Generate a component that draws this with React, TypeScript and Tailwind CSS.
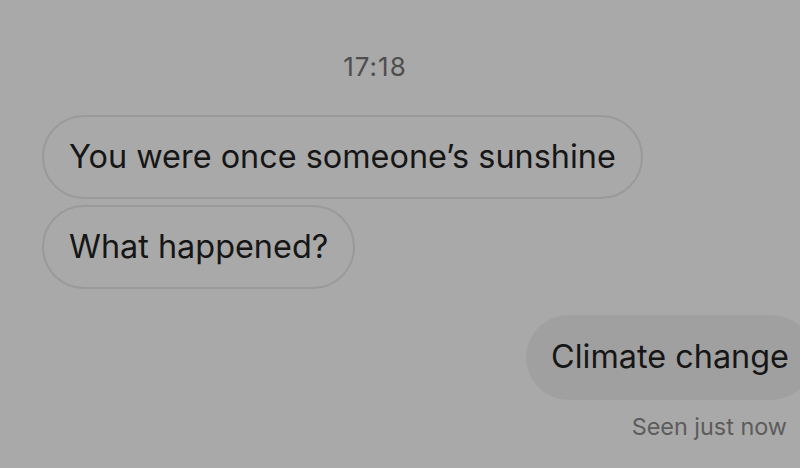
import React from "react";

export default function App() {
  return (
    <div
      className="w-[800px] h-[468px] overflow-hidden bg-[#a9a9a9] text-[#161616] flex flex-col"
      style={{ fontFamily: "Inter, 'Liberation Sans', sans-serif" }}
    >
      <div className="mt-[54px] h-[26px] pr-[50px] flex items-center justify-center text-[26px] tracking-[1px] text-[#4e4e4e] leading-none">
        17:18
      </div>
      <div className="mt-[35px] pl-[42px] flex flex-col items-start gap-[6px]">
        <div className="h-[84px] flex items-center px-[25px] rounded-full border-2 border-[#9a9a9a] text-[32.4px]">
          You were once someone’s sunshine
        </div>
        <div className="h-[84px] flex items-center px-[25px] rounded-full border-2 border-[#9a9a9a] text-[32.4px]">
          What happened?
        </div>
      </div>
      <div className="mt-[26px] flex justify-end mr-[-14px]">
        <div className="h-[85px] flex items-center px-[25px] rounded-full bg-[#a0a0a0] text-[32.4px]">
          Climate change
        </div>
      </div>
      <div className="mt-[15px] pr-[13px] flex justify-end text-[23.4px] text-[#5c5c5c] leading-none">
        Seen just now
      </div>
    </div>
  );
}
